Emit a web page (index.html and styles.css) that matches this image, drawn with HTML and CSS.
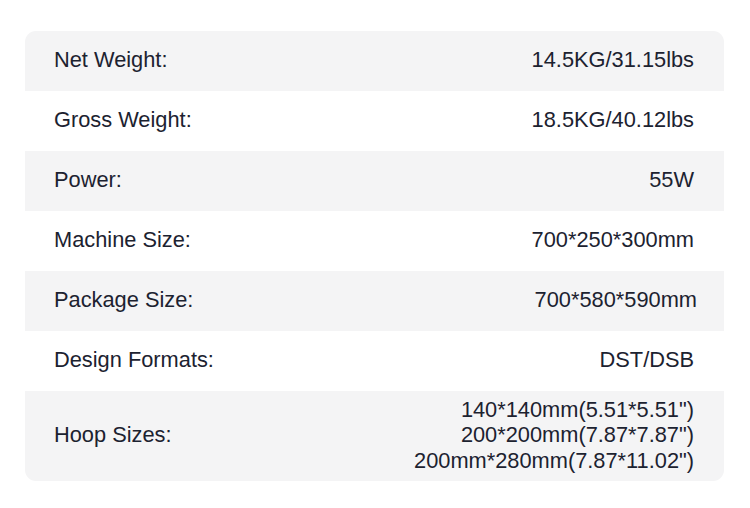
FILE: index.html
```html
<!DOCTYPE html>
<html>
<head>
<meta charset="utf-8">
<link rel="stylesheet" href="styles.css">
</head>
<body>
<div class="specs">
  <div class="row shaded"><span class="label">Net Weight:</span><span class="value">14.5KG/31.15lbs</span></div>
  <div class="row"><span class="label">Gross Weight:</span><span class="value">18.5KG/40.12lbs</span></div>
  <div class="row shaded"><span class="label">Power:</span><span class="value">55W</span></div>
  <div class="row"><span class="label">Machine Size:</span><span class="value">700*250*300mm</span></div>
  <div class="row shaded wide"><span class="label">Package Size:</span><span class="value">700*580*590mm</span></div>
  <div class="row"><span class="label">Design Formats:</span><span class="value">DST/DSB</span></div>
  <div class="row shaded tall"><span class="label">Hoop Sizes:</span><span class="value">140*140mm(5.51*5.51")<br>200*200mm(7.87*7.87")<br>200mm*280mm(7.87*11.02")</span></div>
</div>
</body>
</html>
```
FILE: styles.css
```css
html, body {
  margin: 0;
  padding: 0;
  background: #ffffff;
}
body {
  padding: 31px 26px 0 25px;
  font-family: "Liberation Sans", Arial, sans-serif;
  font-size: 21.8px;
  color: #1c2230;
}
.specs {
  width: 699px;
  border-radius: 11px;
  overflow: hidden;
}
.row {
  display: flex;
  justify-content: space-between;
  align-items: center;
  height: 60px;
  padding: 0 30px 2px 29px;
  box-sizing: border-box;
}
.row.shaded {
  background: #f4f4f5;
}
.row.wide {
  padding-right: 27px;
}
.row.tall {
  height: 90px;
}
.value {
  text-align: right;
  line-height: 25.5px;
}
```
